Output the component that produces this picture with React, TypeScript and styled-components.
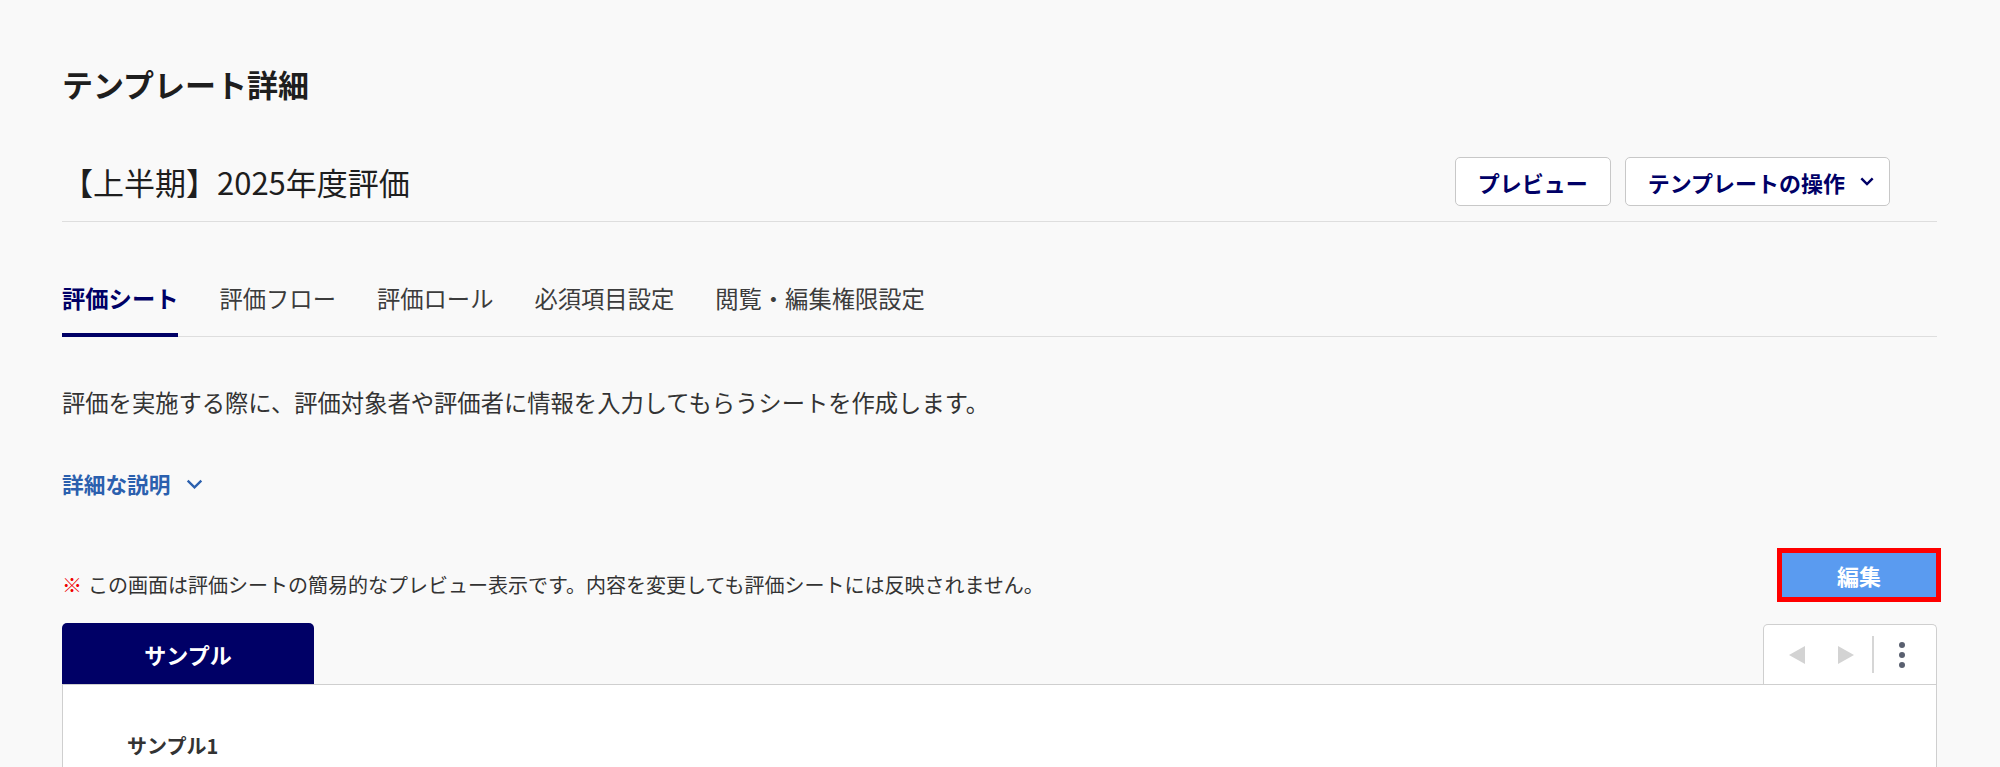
import styled, { createGlobalStyle } from 'styled-components'

const GlobalStyle = createGlobalStyle`
  html, body {
    margin: 0;
    padding: 0;
    background: #f9f9f9;
  }
  body {
    font-family: 'Noto Sans CJK JP', 'Noto Sans', sans-serif;
    color: #333;
  }
`

const Page = styled.div`
  padding: 62px 63px 0 62px;
`

const PageTitle = styled.h1`
  margin: 0;
  font-size: 31px;
  line-height: 44px;
  font-weight: 700;
  color: #1e1e1e;
`

const HeaderRow = styled.div`
  display: flex;
  align-items: center;
  justify-content: space-between;
  margin-top: 51px;
  padding-bottom: 15px;
  border-bottom: 1px solid #dedede;
`

const TemplateName = styled.h2`
  margin: 0;
  font-size: 31px;
  line-height: 49px;
  font-weight: 400;
  color: #1e1e1e;
`

const ButtonGroup = styled.div`
  display: flex;
  gap: 14px;
  padding-right: 47px;
`

const OutlineButton = styled.button`
  display: flex;
  align-items: center;
  gap: 15px;
  height: 49px;
  padding: 0 ${props => (props.$withIcon ? '15px' : '22px')} 0 22px;
  background: #fff;
  border: 1px solid #c8c8c8;
  border-radius: 5px;
  font-family: inherit;
  font-size: 22px;
  font-weight: 700;
  color: #000066;
`

const TabList = styled.div`
  display: flex;
  gap: 41px;
  margin-top: 59px;
  border-bottom: 1px solid #dedede;
`

const Tab = styled.div`
  padding-bottom: 18px;
  margin-bottom: -1px;
  font-size: 23.3px;
  line-height: 34px;
  font-weight: ${props => (props.$active ? 700 : 400)};
  color: ${props => (props.$active ? '#000066' : '#3c3c3c')};
  border-bottom: 4px solid ${props => (props.$active ? '#000066' : 'transparent')};
`

const Description = styled.p`
  margin: 48px 0 0;
  font-size: 23.3px;
  line-height: 34px;
  color: #333;
`

const DetailToggle = styled.div`
  display: flex;
  align-items: center;
  gap: 16px;
  margin-top: 49px;
  font-size: 21.7px;
  line-height: 32px;
  font-weight: 700;
  color: #2b60ae;
`

const NoteRow = styled.div`
  display: flex;
  align-items: flex-end;
  justify-content: space-between;
  margin-top: 53px;
`

const Note = styled.p`
  margin: 0;
  font-size: 20px;
  line-height: 24px;
  color: #333;
`

const Mark = styled.span`
  color: #f00000;
  margin-right: 6px;
`

const EditButton = styled.button`
  width: 154px;
  height: 44px;
  margin-right: 1px;
  background: #5a9bf0;
  border: none;
  outline: 5px solid #ff0000;
  font-family: inherit;
  font-size: 22px;
  font-weight: 700;
  color: #fff;
`

const SheetHeader = styled.div`
  display: flex;
  align-items: flex-end;
  justify-content: space-between;
  margin-top: 26px;
`

const SheetTab = styled.div`
  display: flex;
  align-items: center;
  justify-content: center;
  width: 252px;
  height: 61px;
  background: #000066;
  border-radius: 5px 5px 0 0;
  font-size: 22px;
  font-weight: 700;
  color: #fff;
`

const NavBox = styled.div`
  display: flex;
  align-items: center;
  height: 60px;
  padding: 0 31px 0 25px;
  background: #fff;
  border: 1px solid #cfcfcf;
  border-bottom: none;
  border-radius: 5px 5px 0 0;
  box-sizing: border-box;
`

const NavArrow = styled.span`
  display: flex;
  margin-right: ${props => props.$gap}px;
`

const NavDivider = styled.span`
  width: 2px;
  height: 37px;
  background: #d6d6d6;
  margin-right: 25px;
`

const Kebab = styled.span`
  display: flex;
  flex-direction: column;
  gap: 4px;
`

const Dot = styled.span`
  width: 6px;
  height: 6px;
  border-radius: 50%;
  background: #5a6070;
`

const SheetPanel = styled.div`
  min-height: 36px;
  padding: 46px 64px 0;
  background: #fff;
  border: 1px solid #cfcfcf;
  border-bottom: none;
`

const QuestionTitle = styled.div`
  font-size: 20px;
  line-height: 30px;
  font-weight: 700;
  color: #333;
`

const Chevron = ({ size, color, weight }: { size: number; color: string; weight: number }) => (
  <svg width={size} height={size / 2 + 2} viewBox="0 0 16 10" fill="none">
    <path d="M1.5 1.5 L8 8 L14.5 1.5" stroke={color} strokeWidth={weight} />
  </svg>
)

const tabs = ['評価シート', '評価フロー', '評価ロール', '必須項目設定', '閲覧・編集権限設定']

const App = () => (
  <>
    <GlobalStyle />
    <Page>
      <PageTitle>テンプレート詳細</PageTitle>
      <HeaderRow>
        <TemplateName>【上半期】2025年度評価</TemplateName>
        <ButtonGroup>
          <OutlineButton>プレビュー</OutlineButton>
          <OutlineButton $withIcon>
            テンプレートの操作
            <Chevron size={14} color="#000066" weight={2.8} />
          </OutlineButton>
        </ButtonGroup>
      </HeaderRow>
      <TabList>
        {tabs.map((t, i) => (
          <Tab key={t} $active={i === 0}>{t}</Tab>
        ))}
      </TabList>
      <Description>
        評価を実施する際に、評価対象者や評価者に情報を入力してもらうシートを作成します。
      </Description>
      <DetailToggle>
        詳細な説明
        <Chevron size={17} color="#2b60ae" weight={2.2} />
      </DetailToggle>
      <NoteRow>
        <Note>
          <Mark>※</Mark>この画面は評価シートの簡易的なプレビュー表示です。内容を変更しても評価シートには反映されません。
        </Note>
        <EditButton>編集</EditButton>
      </NoteRow>
      <SheetHeader>
        <SheetTab>サンプル</SheetTab>
        <NavBox>
          <NavArrow $gap={33}>
            <svg width="16" height="18" viewBox="0 0 16 18">
              <polygon points="16,0 16,18 0,9" fill="#d3d3d3" />
            </svg>
          </NavArrow>
          <NavArrow $gap={18}>
            <svg width="16" height="18" viewBox="0 0 16 18">
              <polygon points="0,0 0,18 16,9" fill="#d3d3d3" />
            </svg>
          </NavArrow>
          <NavDivider />
          <Kebab>
            <Dot />
            <Dot />
            <Dot />
          </Kebab>
        </NavBox>
      </SheetHeader>
      <SheetPanel>
        <QuestionTitle>サンプル1</QuestionTitle>
      </SheetPanel>
    </Page>
  </>
)

export default App
